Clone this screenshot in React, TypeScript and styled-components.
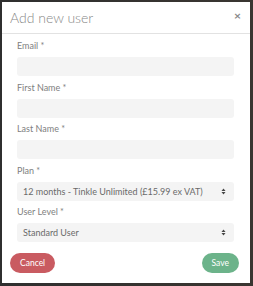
import styled, { createGlobalStyle } from 'styled-components';

const GlobalStyle = createGlobalStyle`
  html, body {
    margin: 0;
    padding: 0;
    background: linear-gradient(90deg, #2f2f2f 0%, #3a3631 100%);
    font-family: Lato, "Noto Sans", sans-serif;
  }
`;

const plans = ['12 months - Tinkle Unlimited (£15.99 ex VAT)'];
const levels = ['Standard User'];

export default function App() {
  return (
    <>
      <GlobalStyle />
      <Backdrop>
        <Modal>
          <Header>
            <Title>Add new user</Title>
            <Close>×</Close>
          </Header>
          <Body>
            <Field>
              <Label>Email *</Label>
              <Input type="text" />
            </Field>
            <Field>
              <Label>First Name *</Label>
              <Input type="text" />
            </Field>
            <Field>
              <Label>Last Name *</Label>
              <Input type="text" />
            </Field>
            <Field>
              <Label>Plan *</Label>
              <SelectBox>
                <span>{plans[0]}</span>
                <Arrows />
              </SelectBox>
            </Field>
            <Field>
              <Label>User Level *</Label>
              <SelectBox>
                <span>{levels[0]}</span>
                <Arrows />
              </SelectBox>
            </Field>
          </Body>
          <Footer>
            <Button $color="#c95b61" $pad={10}>Cancel</Button>
            <Button $color="#6cb38a" $pad={10}>Save</Button>
          </Footer>
        </Modal>
      </Backdrop>
    </>
  );
}

function Arrows() {
  return (
    <svg width="5" height="7" viewBox="0 0 5 7">
      <path d="M0.5 3 L2.5 0.5 L4.5 3 Z" fill="#444" />
      <path d="M0.5 4 L2.5 6.5 L4.5 4 Z" fill="#444" />
    </svg>
  );
}

const Backdrop = styled.div`
  width: 253px;
  height: 286px;
  padding: 2px 3px 3px 2px;
  box-sizing: border-box;
`;

const Modal = styled.div`
  width: 248px;
  height: 281px;
  background: #fff;
  display: flex;
  flex-direction: column;
`;

const Header = styled.div`
  height: 31px;
  border-bottom: 1px solid #e2e2e2;
  display: flex;
  align-items: center;
  justify-content: space-between;
  padding: 0 9px 0 8px;
`;

const Title = styled.div`
  font-size: 14px;
  font-weight: 300;
  color: #888;
`;

const Close = styled.div`
  font-size: 12px;
  font-weight: 700;
  color: #888;
  margin-top: -4px;
`;

const Body = styled.div`
  display: flex;
  flex-direction: column;
  gap: 4.5px;
  padding: 5px 16px 0 15px;
`;

const Field = styled.div`
  display: flex;
  flex-direction: column;
  gap: 4px;
`;

const Label = styled.label`
  font-size: 9px;
  line-height: 14px;
  color: #808080;
`;

const Input = styled.input`
  height: 19px;
  box-sizing: border-box;
  border: none;
  border-radius: 3px;
  background: #f4f4f4;
  outline: none;
`;

const SelectBox = styled.div`
  height: 19px;
  box-sizing: border-box;
  border-radius: 3px;
  background: #f4f4f4;
  display: flex;
  align-items: center;
  justify-content: space-between;
  padding: 0 8px 0 6px;
  font-size: 9px;
  color: #6a6a6a;
`;

const Footer = styled.div`
  display: flex;
  justify-content: space-between;
  align-items: center;
  padding: 11px 11px 0 8px;
`;

const Button = styled.button<{ $color: string; $pad: number }>`
  height: 20px;
  padding: 0 ${(p) => p.$pad}px;
  border: none;
  border-radius: 10px;
  background: ${(p) => p.$color};
  color: #fff;
  font-family: Lato, "Noto Sans", sans-serif;
  font-size: 8.5px;
`;
